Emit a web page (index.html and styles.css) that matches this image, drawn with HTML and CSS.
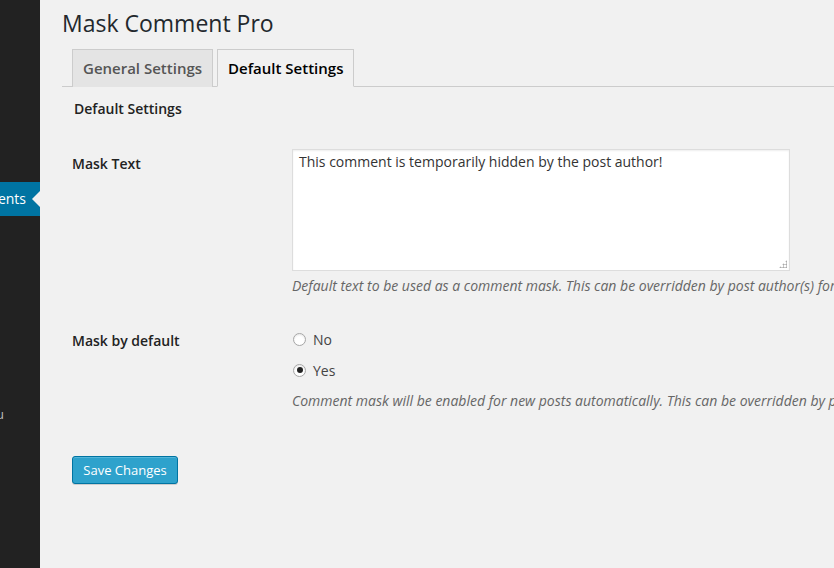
FILE: index.html
```html
<!DOCTYPE html>
<html>
<head>
<meta charset="utf-8">
<title>Mask Comment Pro</title>
<link rel="stylesheet" href="styles.css">
</head>
<body>
<div class="admin">
  <nav class="sidebar">
    <div class="menu-item current"><span>Comments</span></div>
    <div class="menu-item collapse"><span>Collapse menu</span></div>
  </nav>
  <main class="content">
    <h1 class="page-title">Mask Comment Pro</h1>
    <div class="tabs">
      <a class="tab first">General Settings</a>
      <a class="tab active">Default Settings</a>
    </div>
    <div class="panel">
      <h3 class="section-title">Default Settings</h3>
      <div class="form-table">
        <div class="row">
          <div class="th">Mask Text</div>
          <div class="td">
            <div class="textarea">This comment is temporarily hidden by the post author!<span class="grip"></span></div>
            <p class="description">Default text to be used as a comment mask. This can be overridden by post author(s) for each post.</p>
          </div>
        </div>
        <div class="row">
          <div class="th">Mask by default</div>
          <div class="td">
            <label class="radio-line first"><span class="radio"></span>No</label>
            <label class="radio-line"><span class="radio checked"></span>Yes</label>
            <p class="description desc2">Comment mask will be enabled for new posts automatically. This can be overridden by post author(s).</p>
          </div>
        </div>
      </div>
      <button class="button-primary">Save Changes</button>
    </div>
  </main>
</div>
</body>
</html>
```
FILE: styles.css
```css
html, body {
  margin: 0;
  padding: 0;
  height: 100%;
  overflow: hidden;
}
body {
  font-family: "Open Sans", "Noto Sans", sans-serif;
  background: #f1f1f1;
  color: #444;
  font-size: 13px;
}
.admin {
  display: flex;
  height: 568px;
}
.sidebar {
  width: 40px;
  flex: 0 0 40px;
  background: #222;
  padding-top: 182px;
  box-sizing: border-box;
}
.menu-item {
  display: flex;
  justify-content: flex-end;
  overflow: hidden;
  white-space: nowrap;
  position: relative;
}
.menu-item.current {
  background: #0074a2;
  color: #fff;
  font-size: 14px;
  height: 34px;
  line-height: 34px;
  padding-right: 14px;
}
.menu-item.current::after {
  content: "";
  position: absolute;
  right: 0;
  top: 9px;
  border-style: solid;
  border-width: 8px 8px 8px 0;
  border-color: transparent #f1f1f1 transparent transparent;
}
.menu-item.collapse {
  margin-top: 188px;
  color: #bbb;
  font-size: 13px;
  line-height: 20px;
  height: 20px;
  padding-right: 36px;
}
.content {
  flex: 1;
  padding-left: 22px;
  min-width: 0;
  overflow: hidden;
}
.page-title {
  margin: 0;
  padding: 9px 0 4px;
  font-size: 23px;
  line-height: 29px;
  font-weight: 400;
  color: #23282d;
}
.tabs {
  display: flex;
  padding-top: 7px;
  border-bottom: 1px solid #ccc;
}
.tab {
  display: block;
  border: 1px solid #ccc;
  border-bottom: none;
  margin-left: 4px;
  padding: 6px 10px;
  font-size: 15px;
  line-height: 24px;
  font-weight: 600;
  background: #e4e4e4;
  color: #555;
  margin-bottom: -1px;
}
.tab.first {
  margin-left: 10px;
}
.tab.active {
  background: #f1f1f1;
  color: #000;
  border-bottom: 1px solid #f1f1f1;
}
.panel {
  padding-left: 10px;
}
.section-title {
  margin: 12px 0 0 2px;
  font-size: 14px;
  line-height: 20px;
  font-weight: 600;
  color: #222;
}
.form-table {
  margin-top: 15px;
}
.row {
  display: flex;
}
.th {
  width: 200px;
  flex: 0 0 200px;
  padding: 20px 10px 20px 0;
  font-size: 14px;
  line-height: 19px;
  font-weight: 600;
  color: #222;
}
.td {
  padding: 15px 10px;
  flex: 1;
  min-width: 0;
}
.textarea {
  position: relative;
  width: 498px;
  height: 122px;
  box-sizing: border-box;
  background: #fff;
  border: 1px solid #ddd;
  box-shadow: inset 0 1px 2px rgba(0, 0, 0, 0.07);
  padding: 2px 6px;
  font-size: 14px;
  line-height: 20px;
  color: #333;
}
.grip {
  position: absolute;
  right: 2px;
  bottom: 2px;
  width: 8px;
  height: 8px;
  background:
    radial-gradient(circle, #aaa 0.9px, transparent 1.2px) 0 0 / 3px 3px;
  clip-path: polygon(100% 0, 100% 100%, 0 100%);
}
.description {
  margin: 4px 0 0;
  font-size: 14px;
  line-height: 21px;
  font-style: italic;
  color: #666;
  white-space: nowrap;
}
.desc2 {
  margin-top: -1px;
}
.radio-line {
  display: flex;
  align-items: center;
  height: 20px;
  margin-bottom: 11px;
  font-size: 14px;
  color: #444;
}
.radio-line.first {
  margin-top: 3px;
}
.radio {
  width: 13px;
  height: 13px;
  box-sizing: border-box;
  border: 1px solid #a6a6a6;
  border-radius: 50%;
  background: #fff;
  margin: 0 7px 0 1px;
  position: relative;
  box-shadow: inset 0 1px 2px rgba(0, 0, 0, 0.1);
}
.radio.checked::after {
  content: "";
  position: absolute;
  left: 2.5px;
  top: 2.5px;
  width: 6px;
  height: 6px;
  border-radius: 50%;
  background: #222;
}
.button-primary {
  display: block;
  margin-top: 30px;
  height: 28px;
  width: 106px;
  padding: 0 10px 1px;
  font-family: "Open Sans", "Noto Sans", sans-serif;
  font-size: 13px;
  line-height: 26px;
  color: #fff;
  background: #2ea2cc;
  border: 1px solid #0074a2;
  border-radius: 3px;
  box-shadow: inset 0 1px 0 rgba(120, 200, 230, 0.5), 0 1px 0 rgba(0, 0, 0, 0.15);
  cursor: pointer;
}
```
